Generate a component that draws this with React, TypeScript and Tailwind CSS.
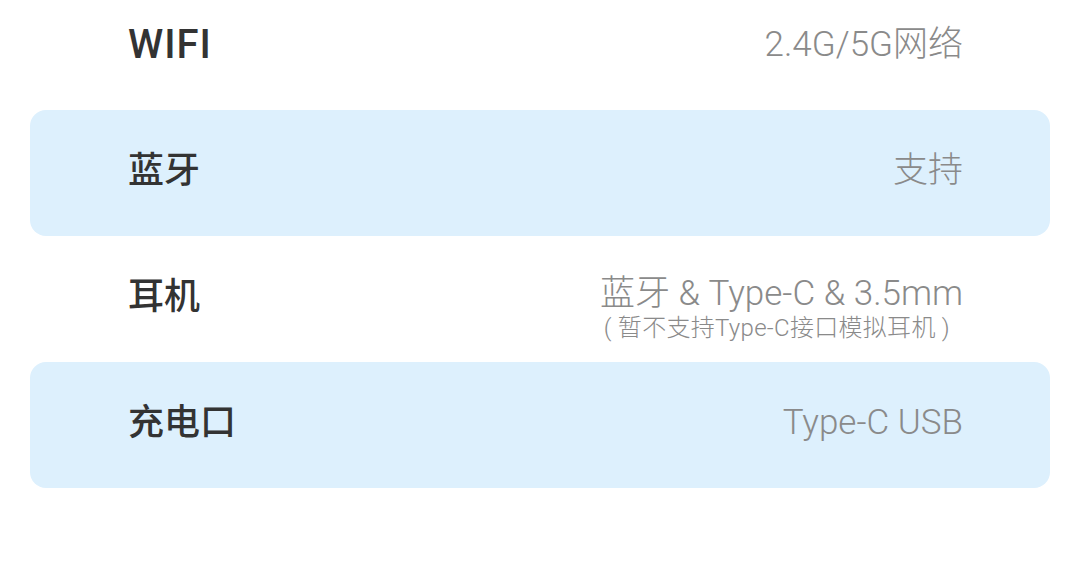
import React from 'react';

type Spec = {
  label: string;
  value: string;
  note?: string;
  shaded?: boolean;
};

const specs: Spec[] = [
  { label: 'WIFI', value: '2.4G/5G网络' },
  { label: '蓝牙', value: '支持', shaded: true },
  { label: '耳机', value: '蓝牙 & Type-C & 3.5mm', note: '( 暂不支持Type-C接口模拟耳机 )' },
  { label: '充电口', value: 'Type-C USB', shaded: true },
];

const font = { fontFamily: 'Roboto, "Noto Sans CJK SC", sans-serif' };

const App: React.FC = () => {
  return (
    <div className="w-[1080px] h-[576px] bg-white overflow-hidden" style={font}>
      <div className="-mt-[16px] px-[30px] flex flex-col">
        {specs.map((s) => (
          <div
            key={s.label}
            className={`h-[126px] flex items-center justify-between pl-[98px] pr-[87px] rounded-[16px] ${
              s.shaded ? 'bg-[#ddf0fd]' : ''
            }`}
          >
            <div
              className={`font-medium text-[#333333] leading-[40px] -mt-[4px] ${
                s.label === 'WIFI' ? 'text-[40px] tracking-[1px]' : 'text-[36px]'
              }`}
            >
              {s.label}
            </div>
            <div className={`flex flex-col items-end ${s.note ? 'mt-[18px]' : '-mt-[4px]'}`}>
              <div className="text-[35px] font-light text-[#8a8a8a] leading-[40px]">{s.value}</div>
              {s.note && (
                <div className="text-[24px] font-light text-[#8a8a8a] leading-[28px] mr-[13px] tracking-[0.3px]">
                  {s.note}
                </div>
              )}
            </div>
          </div>
        ))}
      </div>
    </div>
  );
};

export default App;
